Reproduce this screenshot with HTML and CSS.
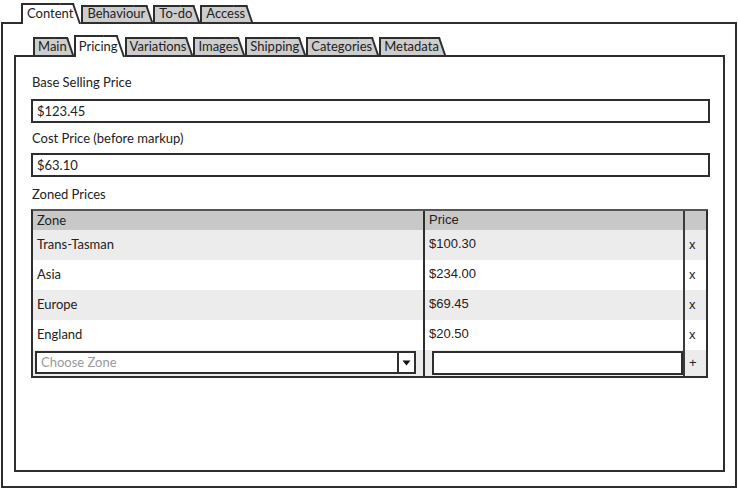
FILE: index.html
```html
<!DOCTYPE html>
<html>
<head>
<meta charset="utf-8">
<link rel="stylesheet" href="styles.css">
</head>
<body>
<div class="app">
  <div class="tabs tabs-outer">
    <div class="tab active">Content</div>
    <div class="tab">Behaviour</div>
    <div class="tab">To-do</div>
    <div class="tab">Access</div>
  </div>
  <div class="panel panel-outer">
    <div class="tabs tabs-inner">
      <div class="tab">Main</div>
      <div class="tab active">Pricing</div>
      <div class="tab">Variations</div>
      <div class="tab">Images</div>
      <div class="tab">Shipping</div>
      <div class="tab">Categories</div>
      <div class="tab">Metadata</div>
    </div>
    <div class="panel panel-inner">
      <div class="label">Base Selling Price</div>
      <div class="input">$123.45</div>
      <div class="label">Cost Price (before markup)</div>
      <div class="input">$63.10</div>
      <div class="label">Zoned Prices</div>
      <div class="grid">
        <div class="row head">
          <div class="cell zone">Zone</div>
          <div class="cell price">Price</div>
          <div class="cell act"></div>
        </div>
        <div class="row alt">
          <div class="cell zone">Trans-Tasman</div>
          <div class="cell price">$100.30</div>
          <div class="cell act">x</div>
        </div>
        <div class="row">
          <div class="cell zone">Asia</div>
          <div class="cell price">$234.00</div>
          <div class="cell act">x</div>
        </div>
        <div class="row alt">
          <div class="cell zone">Europe</div>
          <div class="cell price">$69.45</div>
          <div class="cell act">x</div>
        </div>
        <div class="row">
          <div class="cell zone">England</div>
          <div class="cell price">$20.50</div>
          <div class="cell act">x</div>
        </div>
        <div class="row alt add">
          <div class="cell zone">
            <div class="select">
              <span class="placeholder">Choose Zone</span>
              <span class="arrow"><svg width="9" height="6" viewBox="0 0 9 6"><path d="M0.5 0.5 L8.5 0.5 L4.5 5.5 Z" fill="#111"/></svg></span>
            </div>
          </div>
          <div class="cell price"><div class="field"></div></div>
          <div class="cell act">+</div>
        </div>
      </div>
    </div>
  </div>
</div>
</body>
</html>
```

FILE: styles.css
```css
* { box-sizing: border-box; }

body {
  margin: 0;
  background: #fff;
  color: #222;
  font-family: Lato, "Liberation Sans", sans-serif;
  font-size: 13px;
}

.app {
  width: 738px;
  height: 489px;
  padding: 3px 1px 1px 1px;
  display: flex;
  flex-direction: column;
}

/* ---------- tabs ---------- */
.tabs {
  display: flex;
  align-items: flex-end;
  position: relative;
  z-index: 1;
  flex: none;
}

.tabs-outer {
  height: 19px;
  padding-left: 20px;
}

.tabs-inner {
  height: 20px;
  padding-left: 19px;
}

.tab {
  position: relative;
  z-index: 1;
  height: 17px;
  padding: 1px 8px 0 6px;
  line-height: 15px;
  white-space: nowrap;
}

.tabs-inner .tab {
  height: 18px;
  padding: 2px 7px 0 5px;
}

.tab::before {
  content: "";
  position: absolute;
  left: 0;
  top: 0;
  bottom: 0;
  right: 8px;
  border-left: 2px solid #2e2e2e;
  border-top: 2px solid #2e2e2e;
  background: #cdcdcd;
  z-index: -1;
}

.tab::after {
  content: "";
  position: absolute;
  top: 0;
  bottom: 0;
  right: 0;
  width: 12px;
  border-top: 2px solid #2e2e2e;
  border-right: 2px solid #2e2e2e;
  background: #cdcdcd;
  transform: skewX(19deg);
  transform-origin: 100% 100%;
  z-index: -1;
}

.tab.active {
  z-index: 3;
  height: 21px;
  margin-bottom: -2px;
  padding-top: 3px;
}

.tabs-inner .tab.active {
  height: 22px;
  padding-top: 4px;
}

.tab.active::before,
.tab.active::after { background: #fff; }

/* ---------- panels ---------- */
.panel {
  border: 2px solid #2e2e2e;
  background: #fff;
}

.panel-outer {
  flex: 1;
  display: flex;
  flex-direction: column;
  padding: 11px 10px 14px 11px;
}

.panel-inner {
  flex: 1;
  padding: 17px 13px 0 15px;
}

.label {
  height: 16px;
  line-height: 16px;
  padding-left: 1px;
  margin-bottom: 9px;
}

.input {
  height: 24px;
  border: 2px solid #2e2e2e;
  padding-left: 4px;
  line-height: 20px;
  margin-bottom: 7px;
}

.input + .label { margin-bottom: 7px; }
.input + .label + .input { margin-bottom: 9px; }

/* ---------- grid ---------- */
.grid {
  width: 677px;
  border: 2px solid #2e2e2e;
  border-top-color: #555;
}

.row {
  display: grid;
  grid-template-columns: 392px 260px 21px;
  height: 30px;
  background: #fff;
}

.row.alt { background: #ececec; }

.row.head {
  height: 19px;
  background: #c8c8c8;
}

.row.add { height: 26px; }

.cell {
  padding: 6px 0 0 4px;
  line-height: 16px;
  white-space: nowrap;
}

.cell.zone { border-right: 2px solid #2e2e2e; }

.cell.price {
  border-right: 2px solid #3a3a3a;
  font-family: "Liberation Sans", Arial, sans-serif;
  padding-left: 4px;
}

.cell.act {
  font-family: "Liberation Sans", Arial, sans-serif;
  padding-left: 4px;
  padding-top: 7px;
}

.head .cell { padding-top: 1px; }

.add .cell { padding-top: 1px; }
.add .cell.zone { padding-left: 2px; padding-right: 7px; }
.add .cell.price { padding-left: 7px; padding-right: 0; }
.add .cell.act { padding-top: 5px; }

.select {
  height: 23px;
  border: 2px solid #2e2e2e;
  background: #fff;
  display: flex;
  align-items: stretch;
}

.placeholder {
  flex: 1;
  color: #9a9a9a;
  padding-left: 4px;
  line-height: 19px;
}

.arrow {
  width: 17px;
  border-left: 2px solid #2e2e2e;
  display: flex;
  align-items: center;
  justify-content: center;
}

.field {
  height: 24px;
  border: 2px solid #2e2e2e;
  background: #fff;
}
```
